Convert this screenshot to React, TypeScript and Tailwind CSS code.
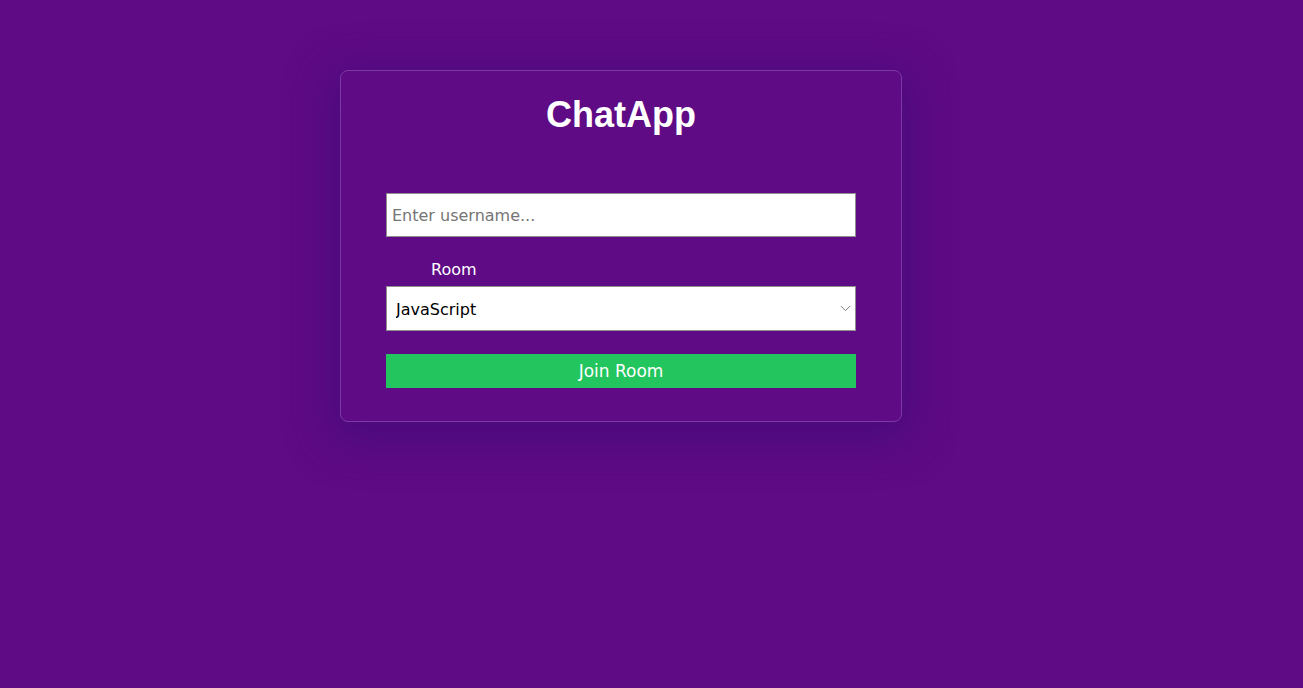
import { ChevronDown } from 'lucide-react'

// Pantalla de entrada al chat: nombre de usuario + sala.
const ROOMS = ['JavaScript', 'Python', 'PHP', 'C#', 'Ruby', 'Java']

export default function App() {
  return (
    <div className="min-h-screen w-full bg-[#5e0b85] flex pl-[340px]">
      <div className="mt-[70px] w-[562px] h-[352px] rounded-lg border border-[#7a3aa0] bg-[#5e0b85] shadow-[0_10px_40px_10px_rgba(60,10,120,0.55)] px-[45px] pt-[22px]">
        <h1 className="text-center text-[36px] leading-[44px] font-bold text-white font-['Liberation_Sans',Arial,sans-serif]">ChatApp</h1>

        <div className="mt-[56px] flex flex-col font-['DejaVu_Sans',Tahoma,sans-serif]">
          <input
            type="text"
            placeholder="Enter username..."
            className="h-[44px] w-full bg-white border border-[#8f8f8f] px-[5px] text-[16px] text-black placeholder:text-[#757575] outline-none"
          />

          <label className="mt-[23px] ml-[45px] text-[16px] leading-[20px] text-white">Room</label>

          <div className="relative mt-[6px]">
            <select className="h-[45px] w-full appearance-none bg-white border border-[#8f8f8f] pl-[9px] pt-[2px] text-[16px] text-black outline-none">
              {ROOMS.map((r) => (
                <option key={r}>{r}</option>
              ))}
            </select>
            <ChevronDown className="absolute right-[2px] top-[14px] w-[17px] h-[17px] text-[#7a7a7a] pointer-events-none" strokeWidth={1.4} />
          </div>

          <button className="mt-[23px] h-[34px] w-full bg-[#22c55e] text-white text-[17px] leading-[34px]">Join Room</button>
        </div>
      </div>
    </div>
  )
}
